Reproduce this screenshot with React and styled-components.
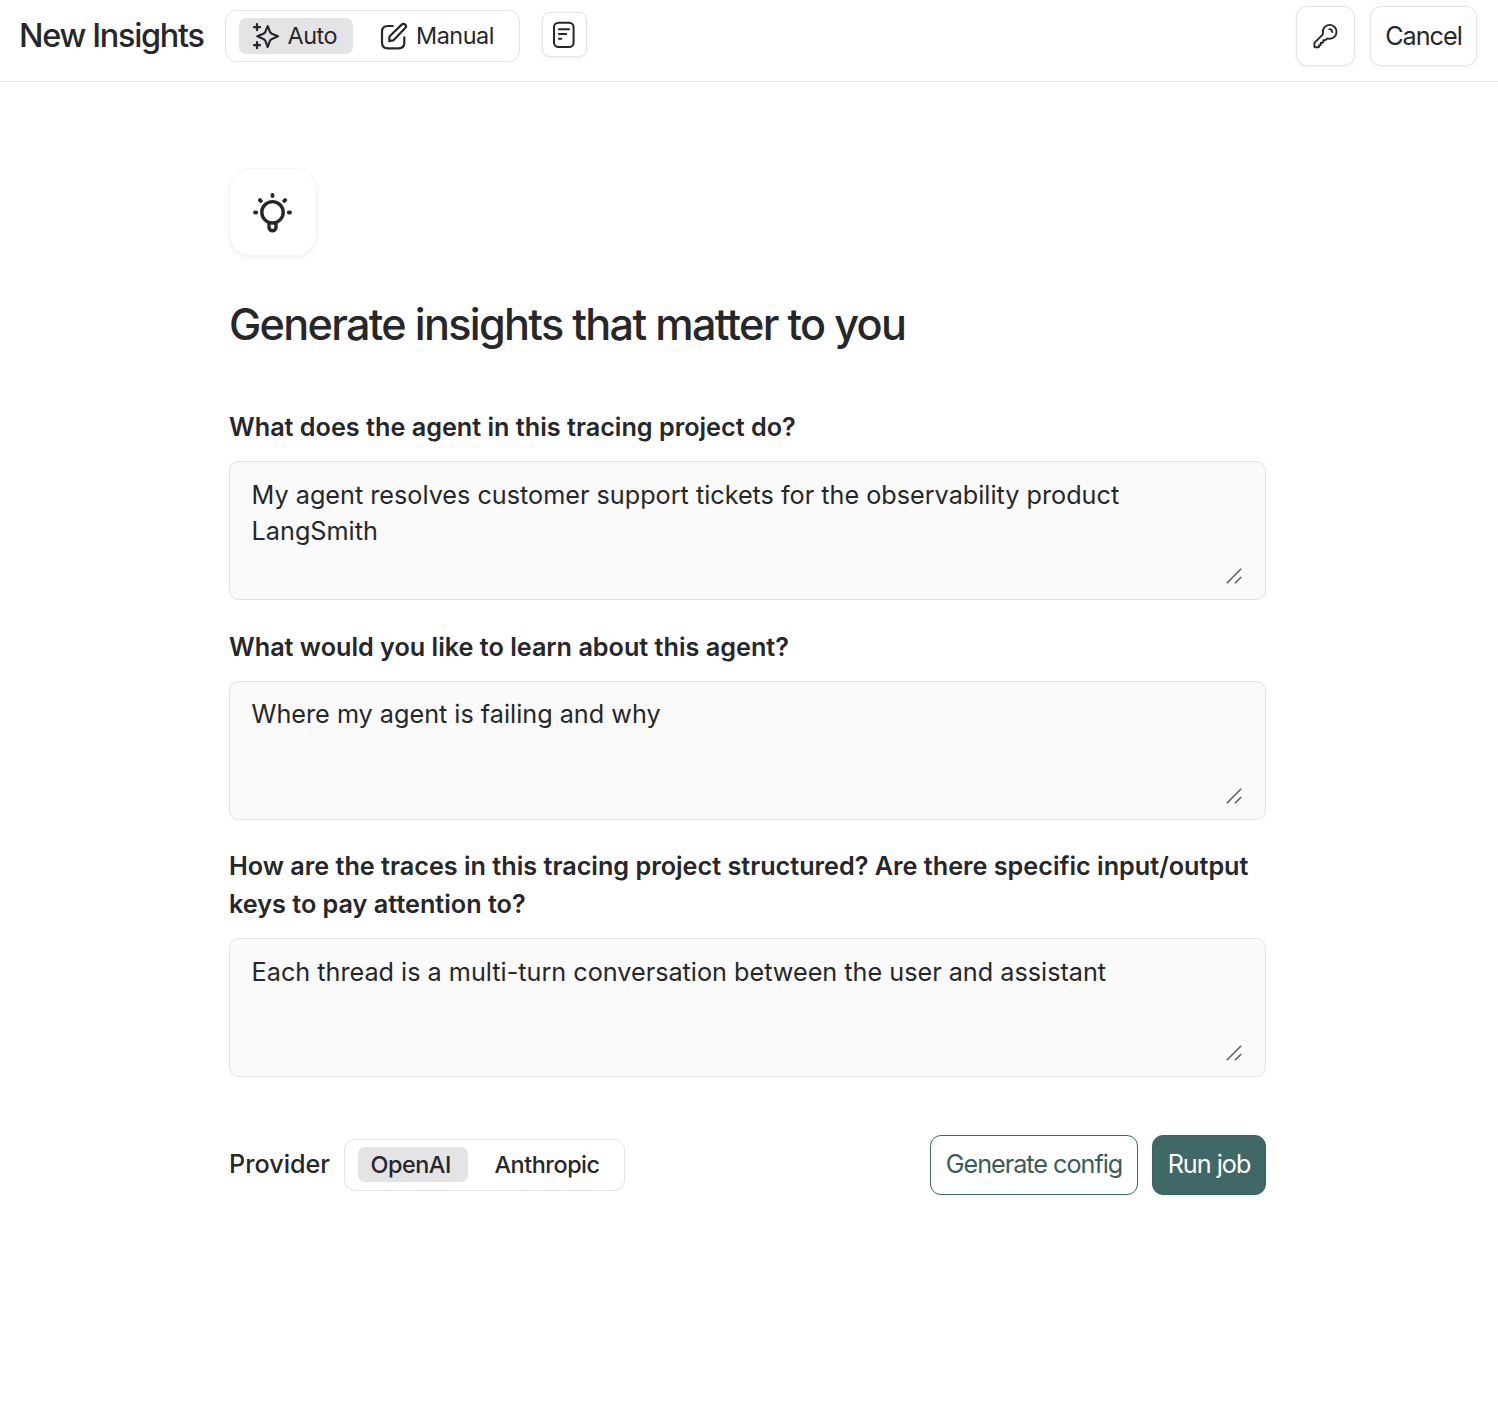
import React, { useState } from "react";
import styled, { createGlobalStyle, css } from "styled-components";

const Global = createGlobalStyle`
  *, *::before, *::after { box-sizing: border-box; }
  html, body { margin: 0; background: #fff; }
  body, button, textarea { font-family: Inter, "Liberation Sans", sans-serif; color: #26272b; }
  button { cursor: pointer; }
`;

const Page = styled.div`
  min-height: 1408px;
  background: #fff;
`;

const Header = styled.header`
  display: flex;
  align-items: center;
  height: 82px;
  padding: 0 21px 9px 19px;
  border-bottom: 1px solid #e4e4e7;
`;

const Title = styled.h2`
  width: 206px;
  margin: 0;
  font-size: 32.4px;
  line-height: 44px;
  font-weight: 500;
  letter-spacing: -0.04em;
  white-space: nowrap;
`;

const Segmented = styled.div`
  display: flex;
  align-items: center;
  gap: 14px;
  width: ${(p) => p.$width}px;
  height: 52px;
  padding: 0 10px 0 13px;
  border: 1px solid #e4e4e7;
  border-radius: 11px;
  background: #fff;
`;

const Segment = styled.button`
  display: flex;
  flex: none;
  align-items: center;
  gap: ${(p) => p.$gap || 8}px;
  height: ${(p) => (p.$icon ? 36 : 35)}px;
  margin-bottom: ${(p) => (p.$icon ? 0 : 1)}px;
  padding: 0 0 1px 12.5px;
  width: ${(p) => p.$width}px;
  border: 0;
  border-radius: 7px;
  background: ${(p) => (p.$active ? "#e4e4e7" : "transparent")};
  font-size: 23.4px;
  font-weight: ${(p) => (p.$icon ? 400 : 500)};
  letter-spacing: -0.02em;
  white-space: nowrap;

  svg { flex: none; }
`;

const Button = styled.button`
  display: flex;
  align-items: center;
  justify-content: center;
  width: ${(p) => p.$width}px;
  height: 60px;
  padding: 0 0 2px;
  border: 1px solid #e4e4e7;
  border-radius: 11px;
  background: #fff;
  box-shadow: 0 2px 4px rgba(16, 24, 40, 0.05);
  font-size: 25.2px;
  letter-spacing: -0.04em;
  white-space: nowrap;

  ${(p) => p.$tone === "outline" && css`
    border-color: #3f6866;
    color: #3a5c5a;
  `}
  ${(p) => p.$tone === "solid" && css`
    border-color: #376462;
    background: #3f6866;
    color: #fff;
  `}
`;

const HeaderButton = styled(Button)`
  padding: 0;
`;

const DocButton = styled(Button)`
  height: 45px;
  margin: -3px 0 0 22px;
  padding: 0 2px 0 0;
  border-radius: 8px;
`;

const HeaderActions = styled.div`
  display: flex;
  gap: 15px;
  margin-left: auto;
`;

const Main = styled.main`
  width: 1037px;
  margin-left: 229px;
  padding-top: 86px;
`;

const IconTile = styled.div`
  display: flex;
  align-items: center;
  justify-content: center;
  width: 88px;
  height: 88px;
  padding-top: 1px;
  border: 1px solid #f4f4f5;
  border-radius: 22px;
  box-shadow: 0 2px 4px rgba(16, 24, 40, 0.06);
`;

const Heading = styled.h1`
  margin: 39px 0 0;
  font-size: 43.2px;
  line-height: 58px;
  font-weight: 500;
  letter-spacing: -0.0395em;
  white-space: nowrap;
`;

const Form = styled.form`
  display: flex;
  flex-direction: column;
  gap: 27.5px;
  margin-top: 55px;
`;

const Field = styled.div`
  display: flex;
  flex-direction: column;
  gap: 15px;
`;

const Label = styled.label`
  font-size: 25.21px;
  line-height: 38px;
  font-weight: 600;
`;

const AreaBox = styled.div`
  position: relative;
  height: 139px;
  background: #fcfcfc;
`;

const Area = styled.textarea`
  display: block;
  width: 100%;
  height: 100%;
  padding: 14.8px 20px 15px 21.6px;
  border: 1px solid #e4e4e7;
  border-radius: 10px;
  outline: none;
  resize: none;
  overflow: hidden;
  background: #fafafa;
  font-size: 25.21px;
  line-height: 36px;
`;

const Grip = styled.svg`
  position: absolute;
  right: 23px;
  bottom: 15px;
`;

const Footer = styled.footer`
  display: flex;
  align-items: center;
  height: 60px;
  margin-top: 58px;
`;

const ProviderLabel = styled.span`
  width: 115px;
  padding-bottom: 2px;
  font-size: 25.2px;
  font-weight: 500;
`;

const FooterActions = styled.div`
  display: flex;
  gap: 14px;
  margin-left: auto;
`;

const stroke = {
  fill: "none",
  stroke: "currentColor",
  strokeLinecap: "round",
  strokeLinejoin: "round",
};

const StarsIcon = () => (
  <svg width="28" height="28" viewBox="0 0 28 28" {...stroke} strokeWidth="2.2">
    <path d="M5 2.200v6M2 5.200h6M5 20.200v6M2 23.200h6" />
    <path d="M15.700 4.200l2.200 5.500c.5 1.100.9 1.500 2 2l6.100 2.600-6.100 2.600c-1.100.5-1.500.9-2 2L15.700 25l-2.300-6.100c-.5-1.100-.9-1.500-2-2l-6.100-2.600 6.100-2.600c1.100-.5 1.500-.9 2-2z" />
  </svg>
);

const EditIcon = () => (
  <svg width="28" height="28" viewBox="0 0 28 28" {...stroke} strokeWidth="2.200">
    <path d="M12.700 4H8C4 4 2 5.500 2 9.500v11C2 24.500 4 26.300 8 26.300h10.500c4 0 5.800-1.800 5.800-5.800v-5.200" />
    <path d="M9.300 19.200v-3.400c0-.8.3-1.500.9-2.100L21.700 2.600c1-1 2.500-1 3.500 0s1 2.400 0 3.400L14 17.700c-.6.6-1.300.9-2.100.9-.9 0-1.800 0-2.600.600z" />
  </svg>
);

const DocIcon = () => (
  <svg width="22" height="28" viewBox="0 0 22 28" {...stroke} strokeWidth="2">
    <rect x="1" y="1.700" width="19.600" height="24.300" rx="4.500" />
    <path d="M6 8.200h10M6 13h7.200M6 17.800h2.200" />
  </svg>
);

const KeyIcon = () => (
  <svg width="26" height="26" viewBox="0 0 26 26" {...stroke} strokeWidth="1.900">
    <path d="M16.800 1.900a6.900 6.900 0 1 1-1.300 13.700c-.8-.2-1.300-.1-1.800.4l-.9.900c-.3.300-.6.400-1 .4h-1.500v1.700c0 .5-.3.800-.8.800H7.800v1.700c0 .5-.3.800-.8.800H6.100v1.200c0 .5-.3.800-.8.800H2.200c-.5 0-.8-.3-.8-.8v-2.900c0-.5.200-.9.500-1.200l7.500-7.500c.5-.5.600-1 .5-1.800A6.900 6.900 0 0 1 16.800 1.900z" />
    <path d="M16.300 6.100a3.200 3.200 0 0 1 2.900 2.900" />
  </svg>
);

const BulbIcon = () => (
  <svg width="42" height="42" viewBox="0 0 42 42" {...stroke} strokeWidth="3.400">
    <circle cx="20.500" cy="20.300" r="10.700" />
    <path d="M17 31.500v3.700a3.500 3.500 0 0 0 7 0v-3.700" />
    <path strokeWidth="3.800" d="M20.500 3v1M7.900 8.100l1 .8M33.200 8.100l-1 .8M3 20.500h1.200M36.800 20.500h1.200" />
  </svg>
);

const FIELDS = [
  {
    id: "agent",
    label: "What does the agent in this tracing project do?",
    value: "My agent resolves customer support tickets for the observability product LangSmith",
  },
  {
    id: "learn",
    label: "What would you like to learn about this agent?",
    value: "Where my agent is failing and why",
  },
  {
    id: "traces",
    label:
      "How are the traces in this tracing project structured? Are there specific input/output keys to pay attention to?",
    value: "Each thread is a multi-turn conversation between the user and assistant",
  },
];

function TextField({ field }) {
  return (
    <Field>
      <Label htmlFor={field.id}>{field.label}</Label>
      <AreaBox>
        <Area id={field.id} defaultValue={field.value} spellCheck={false} />
        <Grip width="17" height="17" viewBox="0 0 17 17" fill="none" stroke="#606064" strokeWidth="1.600">
          <path d="M.8 15.200L15.200.8M9 15.200L15.200 9" />
        </Grip>
      </AreaBox>
    </Field>
  );
}

export default function App() {
  const [mode, setMode] = useState("auto");
  const [provider, setProvider] = useState("openai");

  return (
    <Page>
      <Global />
      <Header>
        <Title>New Insights</Title>
        <Segmented $width={295}>
          <Segment $icon $width={114} $active={mode === "auto"} onClick={() => setMode("auto")}>
            <StarsIcon />
            Auto
          </Segment>
          <Segment $icon $width={140} $gap={8.500} $active={mode === "manual"} onClick={() => setMode("manual")}>
            <EditIcon />
            Manual
          </Segment>
        </Segmented>
        <DocButton $width={45} aria-label="Documentation">
          <DocIcon />
        </DocButton>
        <HeaderActions>
          <HeaderButton $width={59} aria-label="API keys">
            <KeyIcon />
          </HeaderButton>
          <HeaderButton $width={107}>Cancel</HeaderButton>
        </HeaderActions>
      </Header>

      <Main>
        <IconTile>
          <BulbIcon />
        </IconTile>
        <Heading>Generate insights that matter to you</Heading>
        <Form>
          {FIELDS.map((field) => (
            <TextField key={field.id} field={field} />
          ))}
        </Form>
        <Footer>
          <ProviderLabel>Provider</ProviderLabel>
          <Segmented $width={281}>
            <Segment $width={110} $active={provider === "openai"} onClick={() => setProvider("openai")}>
              OpenAI
            </Segment>
            <Segment $width={131} $active={provider === "anthropic"} onClick={() => setProvider("anthropic")}>
              Anthropic
            </Segment>
          </Segmented>
          <FooterActions>
            <Button $tone="outline" $width={208}>Generate config</Button>
            <Button $tone="solid" $width={114}>Run job</Button>
          </FooterActions>
        </Footer>
      </Main>
    </Page>
  );
}
